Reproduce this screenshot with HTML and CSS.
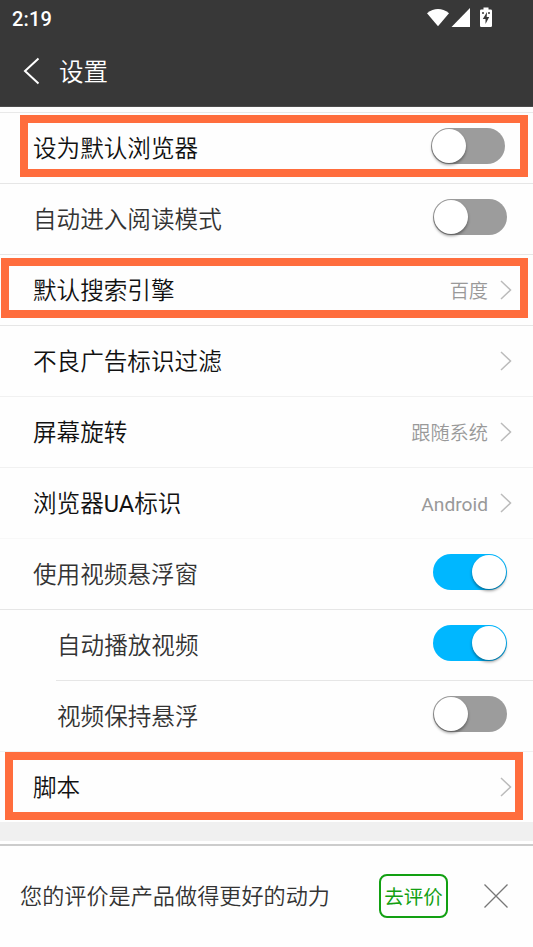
FILE: index.html
```html
<!DOCTYPE html>
<html lang="zh-CN">
<head>
<meta charset="utf-8">
<title>设置</title>
<link rel="stylesheet" href="styles.css">
</head>
<body>
<header class="header">
  <div class="status">
    <span class="time">2:19</span>
    <svg class="status-icons" width="68" height="24" viewBox="0 0 68 24">
      <path d="M0 5.2Q11 -3.2 22 5.2L11 18.3Z" fill="#fff"/>
      <path d="M43 0V19H24.5Z" fill="#fff"/>
      <path d="M56.500 -.5h5v2h2.200q1.300 0 1.300 1.300v14.900q0 1.300-1.300 1.300H54.300q-1.300 0-1.300-1.300V2.800q0-1.300 1.300-1.300h2.200z" fill="#fff"/>
      <path d="M60 4L55.800 11H58.500V16L62.200 9H59.700Z" fill="#383838"/>
      <path d="M55 4h2v2h-2zM61 4h2v2h-2z" fill="#383838" opacity=".75"/>
    </svg>
  </div>
  <div class="nav">
    <svg class="back" width="18" height="28" viewBox="0 0 18 28"><path d="M15.500 1.500L2 14l13.500 12.500" fill="none" stroke="#fff" stroke-width="2"/></svg>
    <h1>设置</h1>
  </div>
</header>
<main class="list">
  <div class="row strong first"><span>设为默认浏览器</span><i class="toggle"></i><b class="mark mark-browser"></b></div>
  <div class="row"><span>自动进入阅读模式</span><i class="toggle"></i></div>
  <div class="row strong"><span>默认搜索引擎</span><em>百度</em><svg class="arrow" viewBox="0 0 12 20"><path d="M1 1l9.500 9L1 19"/></svg><b class="mark mark-search"></b></div>
  <div class="row strong faint"><span>不良广告标识过滤</span><svg class="arrow" viewBox="0 0 12 20"><path d="M1 1l9.500 9L1 19"/></svg></div>
  <div class="row strong faint"><span>屏幕旋转</span><em>跟随系统</em><svg class="arrow" viewBox="0 0 12 20"><path d="M1 1l9.500 9L1 19"/></svg></div>
  <div class="row strong fainter"><span>浏览器<span class="latin">UA</span>标识</span><em class="latin">Android</em><svg class="arrow" viewBox="0 0 12 20"><path d="M1 1l9.500 9L1 19"/></svg></div>
  <div class="row"><span>使用视频悬浮窗</span><i class="toggle on"></i></div>
  <div class="row sub inset"><span>自动播放视频</span><i class="toggle on"></i></div>
  <div class="row sub faint"><span>视频保持悬浮</span><i class="toggle"></i></div>
  <div class="row strong last"><span>脚本</span><svg class="arrow" viewBox="0 0 12 20"><path d="M1 1l9.500 9L1 19"/></svg><b class="mark mark-script"></b></div>
</main>
<div class="gap"></div>
<footer class="rate">
  <p>您的评价是产品做得更好的动力</p>
  <button type="button">去评价</button>
  <svg class="close" width="24" height="24" viewBox="0 0 24 24"><path d="M.5.5l23 23M23.500.5l-23 23" fill="none" stroke="#777" stroke-width="1.300"/></svg>
</footer>
</body>
</html>
```
FILE: styles.css
```css
* { box-sizing: border-box; }
body {
  margin: 0;
  height: 947px;
  overflow: hidden;
  display: flex;
  flex-direction: column;
  background: #fefefe;
  color: #333;
  font-family: Roboto, "Noto Sans CJK SC", sans-serif;
  font-weight: 350;
}
.header { flex: none; height: 107px; background: #383838; color: #fff; border-bottom: 1px solid #4c4c4c; }
.status { height: 36px; padding: 8px 40px 0 12px; display: flex; justify-content: space-between; }
.time { font-size: 20px; line-height: 22px; font-weight: 500; letter-spacing: .2px; }
.status-icons { margin-right: -2px; overflow: visible; }
.nav { height: 70px; padding-left: 23px; display: flex; align-items: center; }
.back { flex: none; }
h1 { margin: 3px 0 0 18px; font-size: 24.500px; line-height: 34px; font-weight: inherit; }

.list { flex: none; margin-top: 5px; border-top: 1px solid #e9e9e9; }
.row {
  position: relative;
  height: 71px;
  padding: 0 21px 0 33px;
  display: flex;
  align-items: center;
  border-bottom: 1px solid #e6e6e6;
  font-size: 23.600px;
  line-height: 34px;
}
.row > span { margin: 2px auto 0 0; }
.row .latin { font-weight: 400; }
.strong { color: #111; }
.faint { border-bottom-color: #f1f1f1; }
.fainter { border-bottom-color: #f8f8f8; }
.sub { padding-left: 57px; }
.inset { border-bottom-color: transparent; background: linear-gradient(#e6e6e6, #e6e6e6) 56px 100% / 100% 1px no-repeat border-box; }
.last { border-bottom: 0; }
.last > span { margin-top: 1px; }
.row em { margin: 3px 12px 0 0; font-style: normal; font-size: 19.200px; color: #999; }
.arrow { flex: none; width: 12px; height: 20px; fill: none; stroke: #bbb; stroke-width: 1.500; }
.last .arrow { margin-top: -1px; }

.toggle { width: 74px; height: 36px; margin: -4px 5px 0 0; padding: 1px; border-radius: 18px; background: #9c9c9c; display: flex; }
.first .toggle { margin-right: 7px; margin-top: -5px; }
.toggle::before { content: ""; width: 34px; height: 34px; border-radius: 50%; background: #fff; box-shadow: 0 2px 3px rgba(0, 0, 0, .4); }
.toggle.on { background: #00b7ff; justify-content: flex-end; }

.mark { position: absolute; border: 8px solid #ff6d3d; pointer-events: none; }
.mark-browser { left: 20px; right: 5px; top: 2px; height: 62px; }
.mark-search { left: 1px; right: 5px; top: 3px; height: 60px; }
.mark-script { left: 5px; right: 10px; top: 0; height: 68px; }

.gap { flex: none; height: 19px; margin-top: -1px; background: #f0f0f0; }
.rate { flex: 1; margin-top: 3px; padding: 0 25px 1px 20px; border-top: 2px solid #ccc; display: flex; align-items: center; }
.rate p { margin: 0 auto 0 0; font-size: 22.150px; line-height: 34px; }
.rate button {
  width: 69px;
  height: 44px;
  margin-right: 36px;
  padding: 0;
  border: 2px solid #12a012;
  border-radius: 8px;
  background: none;
  color: #12a012;
  font: 400 19.500px/28px "Noto Sans CJK SC", sans-serif;
}
.close { flex: none; }
```
